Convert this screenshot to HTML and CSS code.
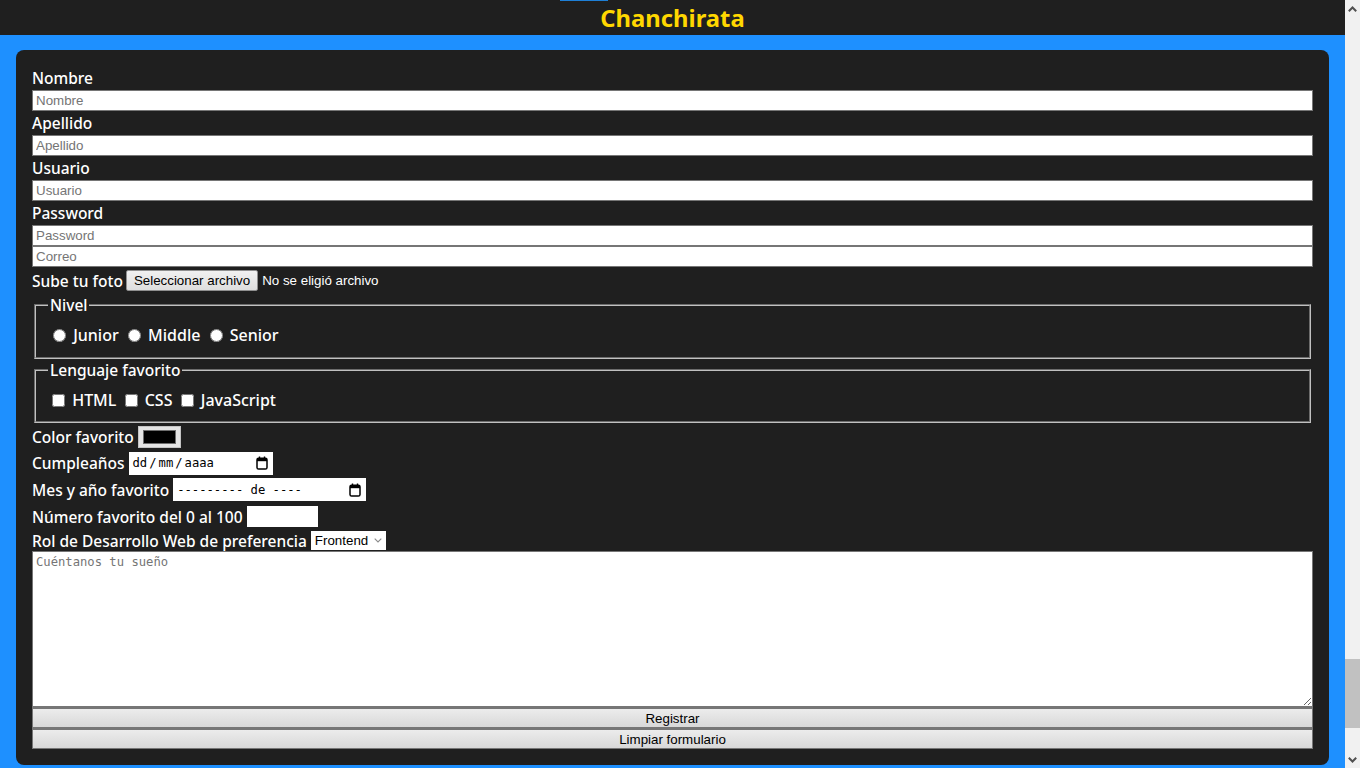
FILE: index.html
```html
<!DOCTYPE html>
<html lang="es">
<head>
<meta charset="utf-8">
<title>Chanchirata</title>
<link rel="stylesheet" href="styles.css">
</head>
<body>
<div class="screen">
  <div class="page">
    <header class="top">
      <div class="top-strip"></div>
      <h1 class="brand">Chanchirata</h1>
    </header>
    <main class="stage">
      <form class="card">
        <label class="lbl" for="nombre">Nombre</label>
        <input class="txt" id="nombre" type="text" placeholder="Nombre">
        <label class="lbl" for="apellido">Apellido</label>
        <input class="txt" id="apellido" type="text" placeholder="Apellido">
        <label class="lbl" for="usuario">Usuario</label>
        <input class="txt" id="usuario" type="text" placeholder="Usuario">
        <label class="lbl" for="password">Password</label>
        <input class="txt" id="password" type="password" placeholder="Password">
        <input class="txt" id="correo" type="email" placeholder="Correo">

        <div class="row row-file">
          <span>Sube tu foto</span>
          <button type="button" class="file-btn">Seleccionar archivo</button>
          <span class="file-name">No se eligió archivo</span>
        </div>

        <fieldset class="group">
          <legend>Nivel</legend>
          <div class="opts">
            <label><input type="radio" name="nivel"> Junior</label>
            <label><input type="radio" name="nivel"> Middle</label>
            <label><input type="radio" name="nivel"> Senior</label>
          </div>
        </fieldset>

        <fieldset class="group">
          <legend>Lenguaje favorito</legend>
          <div class="opts">
            <label><input type="checkbox"> HTML</label>
            <label><input type="checkbox"> CSS</label>
            <label><input type="checkbox"> JavaScript</label>
          </div>
        </fieldset>

        <div class="row row-color">
          <label for="color">Color favorito</label>
          <input class="color" id="color" type="color" value="#000000">
        </div>

        <div class="row row-date">
          <label>Cumpleaños</label>
          <span class="fake-date date-day">
            <span class="mono">dd<i>/</i>mm<i>/</i>aaaa</span>
            <svg class="cal" width="12" height="14" viewBox="0 0 12 14"><path d="M3.5 0.5v2.5M8.5 0.5v2.5" stroke="#000" stroke-width="1.4"/><rect x="1" y="2.2" width="10" height="10.8" rx="1.6" fill="none" stroke="#000" stroke-width="1.5"/><rect x="1" y="2.2" width="10" height="3" fill="#000"/></svg>
          </span>
        </div>

        <div class="row row-month">
          <label>Mes y año favorito</label>
          <span class="fake-date date-month">
            <span class="mono">--------- de ----</span>
            <svg class="cal" width="12" height="14" viewBox="0 0 12 14"><path d="M3.5 0.5v2.5M8.5 0.5v2.5" stroke="#000" stroke-width="1.4"/><rect x="1" y="2.2" width="10" height="10.8" rx="1.6" fill="none" stroke="#000" stroke-width="1.5"/><rect x="1" y="2.2" width="10" height="3" fill="#000"/></svg>
          </span>
        </div>

        <div class="row row-number">
          <label for="numero">Número favorito del 0 al 100</label>
          <input class="num" id="numero" type="number" min="0" max="100">
        </div>

        <div class="row row-select">
          <label for="rol">Rol de Desarrollo Web de preferencia</label>
          <span class="sel">
            <span>Frontend</span>
            <svg width="8" height="5" viewBox="0 0 8 5"><path d="M0.7 0.7L4 4L7.3 0.7" fill="none" stroke="#8a8a8a" stroke-width="1.1"/></svg>
          </span>
        </div>

        <textarea class="dream" placeholder="Cuéntanos tu sueño"></textarea>
        <button type="submit" class="btn">Registrar</button>
        <button type="reset" class="btn">Limpiar formulario</button>
      </form>
    </main>
  </div>
  <div class="scrollbar">
    <div class="sb-arrow">
      <svg width="9" height="6" viewBox="0 0 9 6"><path d="M0.8 5.2L4.5 1.5L8.2 5.2" fill="none" stroke="#505050" stroke-width="2"/></svg>
    </div>
    <div class="sb-track"><div class="sb-thumb"></div></div>
    <div class="sb-arrow">
      <svg width="9" height="6" viewBox="0 0 9 6"><path d="M0.8 0.8L4.5 4.5L8.2 0.8" fill="none" stroke="#505050" stroke-width="2"/></svg>
    </div>
  </div>
</div>
</body>
</html>
```

FILE: styles.css
```css
html, body {
  margin: 0;
  height: 100%;
  overflow: hidden;
}

body {
  background: #1e90ff;
}

.screen {
  display: flex;
  height: 768px;
}

.page {
  flex: 1;
  min-width: 0;
  display: flex;
  flex-direction: column;
  background: #1e90ff;
}

.top {
  height: 35px;
  background: #1f1f1f;
  display: flex;
  flex-direction: column;
}

.top-strip {
  width: 48px;
  height: 1px;
  margin-left: 560px;
  background: #1e7fd6;
}

.brand {
  margin: 0;
  font: 700 23.8px/34px "Noto Sans", sans-serif;
  color: #ffd700;
  text-align: center;
}

.stage {
  flex: 1;
  padding: 15px 16px 0;
  overflow: hidden;
}

.card {
  background: #1f1f1f;
  border-radius: 8px;
  padding: 16px;
  color: #fff;
  font: 500 15.5px "Noto Sans", sans-serif;
}

.lbl {
  display: block;
  line-height: 24px;
}

.txt {
  display: block;
  width: 100%;
  height: 21px;
  box-sizing: border-box;
  margin: 0;
  padding: 1px 3px;
  border: 1px solid #767676;
  background: #fff;
  font: 13.33px "Liberation Sans", Arial, sans-serif;
  color: #000;
}

.txt::placeholder,
.dream::placeholder {
  color: #757575;
}

.row {
  display: flex;
  align-items: center;
  gap: 4px;
  white-space: nowrap;
}

.row-file {
  height: 27px;
  gap: 4px;
}

.file-btn {
  height: 21px;
  margin: 0 0 0 -1px;
  padding: 1px 7px;
  border: 1px solid #8f8f8f;
  border-radius: 2px;
  background: linear-gradient(#f0f0f0, #dedede);
  font: 13.33px "Liberation Sans", Arial, sans-serif;
  color: #000;
}

.file-name {
  font: 13.33px "Liberation Sans", Arial, sans-serif;
}

.group {
  margin: 0 2px;
  padding: 7px 12px 9.5px;
  border: 2px groove #c0c0c0;
}

.group legend {
  padding: 0 2px;
  line-height: 22px;
}

.opts {
  height: 24px;
  line-height: 24px;
  font-size: 16px;
  white-space: nowrap;
}

.opts input[type="radio"] {
  margin: 0 3px 0 5px;
  vertical-align: -1px;
}

.opts input[type="checkbox"] {
  margin: 0 3px 0 4px;
  vertical-align: -1px;
}

.row-color {
  height: 27px;
}

.color {
  width: 43px;
  height: 22px;
  box-sizing: border-box;
  margin: 0;
  padding: 3px 4px;
  border: 1px solid #c4c4c4;
  background: #e4e4e4;
  -webkit-appearance: none;
  appearance: none;
}

.color::-webkit-color-swatch-wrapper {
  padding: 0;
}

.color::-webkit-color-swatch {
  border: 1px solid #6d6d6d;
  border-radius: 0;
}

.row-date {
  height: 26px;
}

.row-month {
  height: 27px;
}

.row-number {
  height: 27px;
}

.row-select {
  height: 21px;
}

.fake-date {
  display: flex;
  align-items: center;
  justify-content: space-between;
  height: 23px;
  box-sizing: border-box;
  padding: 0 5px 0 4px;
  background: #fff;
  color: #000;
}

.date-day {
  width: 144px;
}

.date-month {
  width: 193px;
}

.mono {
  font: 12.2px "DejaVu Sans Mono", monospace;
}

.mono i {
  font-style: normal;
  padding: 0 2px;
}

.cal {
  display: block;
}

.num {
  width: 71px;
  height: 21px;
  box-sizing: border-box;
  margin: 0;
  border: 1px solid #fff;
  background: #fff;
  font: 13.33px "Liberation Sans", Arial, sans-serif;
}

.sel {
  display: flex;
  align-items: center;
  justify-content: space-between;
  width: 75px;
  height: 19px;
  box-sizing: border-box;
  padding: 0 4px;
  background: #fff;
  color: #000;
  font: 13.33px "Liberation Sans", Arial, sans-serif;
}

.dream {
  display: block;
  width: 100%;
  height: 156px;
  box-sizing: border-box;
  margin: 0;
  padding: 3px;
  border: 1px solid #767676;
  background: #fff;
  font: 12.2px "DejaVu Sans Mono", monospace;
  color: #000;
}

.btn {
  display: block;
  width: 100%;
  height: 21px;
  box-sizing: border-box;
  margin: 0;
  padding: 1px 6px;
  border: 1px solid #767676;
  border-top-width: 2px;
  background: linear-gradient(#ececec, #d8d8d8);
  font: 13.33px "Liberation Sans", Arial, sans-serif;
  color: #000;
}

.scrollbar {
  width: 15px;
  background: #f1f1f1;
  display: flex;
  flex-direction: column;
}

.sb-arrow {
  height: 17px;
  display: flex;
  align-items: center;
  justify-content: center;
}

.sb-track {
  flex: 1;
}

.sb-thumb {
  margin-top: 642px;
  height: 69px;
  background: #c1c1c1;
}
```
